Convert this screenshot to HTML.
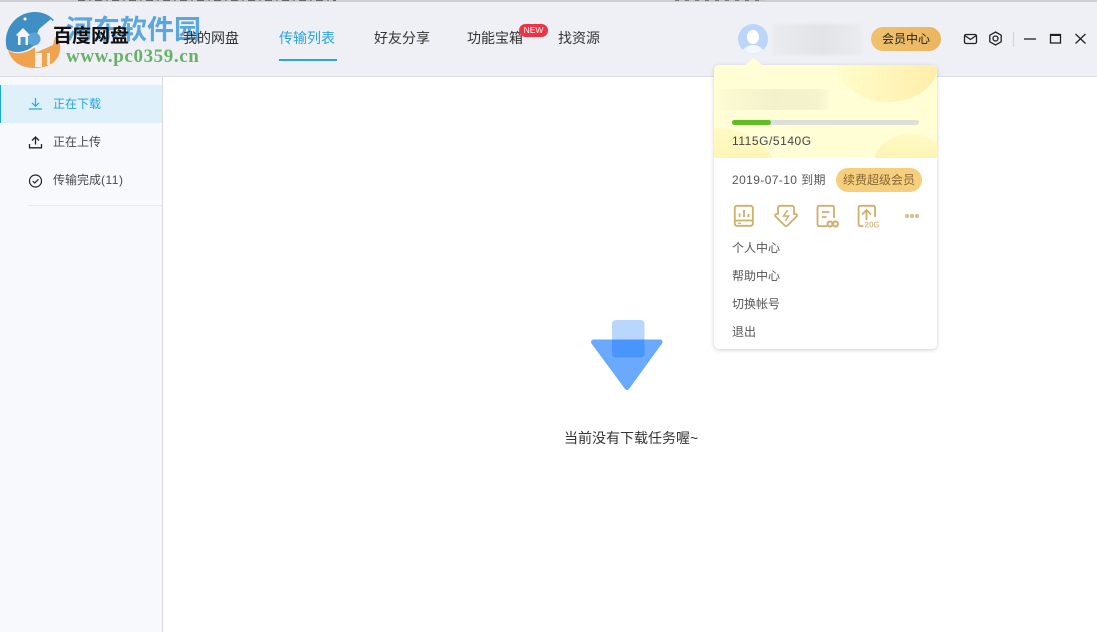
<!DOCTYPE html>
<html lang="zh">
<head>
<meta charset="utf-8">
<style>
html,body{margin:0;padding:0;width:1097px;height:632px;overflow:hidden;background:#fff}
body{position:relative;font-family:"Liberation Sans","Noto Sans CJK SC",sans-serif;color:#333}
.a{position:absolute;white-space:nowrap}
.nav{top:29px;font-size:14px;line-height:18px;color:#333}
.side{left:53px;font-size:12px;line-height:16px;color:#4a4a4a}
.menu{left:732px;font-size:12px;line-height:16px;color:#555}
svg{position:absolute;overflow:visible}
</style>
</head>
<body>
<!-- top strip -->
<div class="a" style="left:0;top:0;width:1097px;height:2px;background:#cfcfd1"></div>
<div class="a" style="left:78px;top:0;width:258px;height:1px;background:repeating-linear-gradient(90deg,#666 0 7px,#bbb 7px 11px,#888 11px 13px,#c4c4c4 13px 17px)"></div>
<div class="a" style="left:675px;top:0;width:90px;height:1px;background:repeating-linear-gradient(90deg,#777 0 4px,#c4c4c4 4px 10px)"></div>
<!-- header -->
<div class="a" style="left:0;top:2px;width:1097px;height:74px;background:#eef0f6;border-bottom:1px solid #dcdde2"></div>
<!-- sidebar -->
<div class="a" style="left:0;top:77px;width:162px;height:555px;background:#f8f9fc;border-right:1px solid #d9dadf"></div>
<div class="a" style="left:0;top:85px;width:162px;height:38px;background:#def1fb"></div>
<div class="a" style="left:0;top:85px;width:1px;height:38px;background:#18a8e0"></div>
<svg style="left:29px;top:98px" width="14" height="12" viewBox="0 0 14 12" fill="none" stroke="#2aa8e0" stroke-width="1.200"><path d="M6.500 0v8M3 4.800l3.500 3.500 3.500-3.500M0 11h13"/></svg>
<div class="a side" style="top:96px;color:#26a3de">正在下载</div>
<svg style="left:29px;top:136px" width="14" height="13" viewBox="0 0 14 13" fill="none" stroke="#222" stroke-width="1.300"><path d="M6.500 8.500V1M3 4.500l3.500-3.500 3.500 3.500M.5 8v3.800h12V8"/></svg>
<div class="a side" style="top:134px">正在上传</div>
<svg style="left:28px;top:173px" width="15" height="15" viewBox="0 0 15 15" fill="none" stroke="#222" stroke-width="1.200"><circle cx="7.500" cy="8" r="6"/><path d="M4.700 8l2 2 3.700-3.700"/></svg>
<div class="a side" style="top:172px">传输完成<span style="letter-spacing:.5px">(11)</span></div>
<div class="a" style="left:28px;top:205px;width:134px;height:1px;background:#e8e9ed"></div>

<!-- nav -->
<div class="a nav" style="left:279px;color:#27a5e2">传输列表</div>
<div class="a" style="left:279px;top:59px;width:58px;height:2px;background:#27a5e2"></div>
<div class="a nav" style="left:374px">好友分享</div>
<div class="a nav" style="left:467px">功能宝箱</div>
<div class="a" style="left:519px;top:24px;width:29px;height:13px;border-radius:7px;background:#ee3344;color:#fff;font-size:8.500px;line-height:13px;text-align:center">NEW</div>
<div class="a nav" style="left:558px">找资源</div>

<!-- watermark logo -->
<svg style="left:5px;top:11px" width="58" height="57" viewBox="0 0 58 57">
<path d="M2 38C-3 20 10 1 30 1c8 0 14 3 19 8L36 20v10L24 38C16 42 8 42 2 38Z" fill="#3f8fc4"/>
<path d="M3 39c7 5 16 4 24-1l24-14c6 8 6 19-2 27-5 4-11 6-19 6C15 57 6 50 3 39Z" fill="#f0a24e"/>
<path d="M30 42h7v14h-7zM42 42h3v12h-3z" fill="#f5efe6"/>
<path d="M30 28l4-10L46 8l10 16-6 2-2 8-18 8Z" fill="#eef0f6"/>
<circle cx="29" cy="28" r="6.500" fill="#5aa3d6"/>
<path d="M11 24l7-7 7 7-2 1v9H13v-9Z" fill="#f7f4f6"/>
<path d="M15.500 26h5v8h-5z" fill="#4a97cc"/>
<circle cx="20" cy="8" r="1.500" fill="#fff"/>
</svg>
<div class="a" style="left:66px;top:14px;font-size:27px;line-height:32px;font-weight:700;color:#4a9fdd;opacity:.9">河东软件园</div>
<div class="a" style="left:53px;top:25px;font-size:19px;line-height:24px;font-weight:700;color:#111">百度网盘</div>
<div class="a nav" style="left:183px">我的网盘</div>
<div class="a" style="left:66px;top:47px;font-family:'Liberation Serif',serif;font-size:19px;line-height:20px;font-weight:700;letter-spacing:.6px;color:#67b266">www.pc0359.cn</div>

<!-- user -->
<svg style="left:738px;top:24px" width="30" height="30" viewBox="0 0 30 30">
<circle cx="15" cy="15" r="15" fill="#bcd5fb"/>
<ellipse cx="15" cy="13" rx="6" ry="7" fill="#fff"/>
<path d="M5 26c3-4 7-5 10-5s7 1 10 5c-6 5-14 5-20 0Z" fill="#f3f6fc"/>
</svg>
<div class="a" style="left:772px;top:24px;width:90px;height:31px;background:linear-gradient(90deg,#ebecf0,#e2e3e6 55%,#ebecee);filter:blur(1px)"></div>
<div class="a" style="left:871px;top:27px;width:70px;height:24px;border-radius:12px;background:linear-gradient(90deg,#f0c26e,#ebb560);color:#222;font-size:12px;line-height:25px;text-align:center">会员中心</div>

<!-- window controls -->
<svg style="left:963px;top:30px" width="130" height="18" viewBox="0 0 130 18" fill="none" stroke="#222" stroke-width="1.300">
<rect x="1.500" y="4.500" width="12" height="9" rx="1.500"/>
<path d="M1.800 5.500l5.700 4 5.700-4"/>
<path d="M32.500 2l5.700 3.200v6.600L32.500 15l-5.700-3.200V5.200Z"/>
<circle cx="32.500" cy="8.500" r="2.500"/>
<path d="M50.500 2v15" stroke="#d6d7dc"/>
<path d="M61 9h12"/>
<rect x="87.500" y="4.500" width="10" height="8.500"/>
<path d="M87 5h11" stroke-width="2"/>
<path d="M112.500 4l10 9.500M122.500 4l-10 9.500"/>
</svg>

<!-- empty state -->
<svg style="left:590px;top:319px" width="75" height="73" viewBox="0 0 75 73">
<path d="M3.500 23H70L37 68.500Z" fill="#6aa9fd" stroke="#6aa9fd" stroke-width="5" stroke-linejoin="round"/>
<path d="M26 1h25c2 0 3.500 1.500 3.500 3.500V20.500H22V4.500C22 2.500 24 1 26 1Z" fill="#b9d6fd"/>
<path d="M22 20.500h32.500V35c0 2-1.500 3.500-3.500 3.500H25.500c-2 0-3.500-1.500-3.500-3.500Z" fill="#4896fb"/>
</svg>
<div class="a" style="left:564px;top:429px;font-size:14px;line-height:18px;color:#333">当前没有下载任务喔~</div>

<!-- popup -->
<div class="a" style="left:714px;top:65px;width:223px;height:284px;background:#fff;border-radius:5px;box-shadow:0 1px 4px rgba(0,0,0,.18)"></div>
<svg style="left:714px;top:65px" width="223" height="93" viewBox="0 0 223 93">
<defs>
<clipPath id="c"><path d="M0 93V5a5 5 0 0 1 5-5h213a5 5 0 0 1 5 5v88Z"/></clipPath>
<linearGradient id="g1" x1="0" x2="1" y1="0" y2="0"><stop offset="0" stop-color="#fffcca"/><stop offset="1" stop-color="#ffeeaa"/></linearGradient>
<linearGradient id="g2" x1="0" x2="0" y1="0" y2="1"><stop offset="0" stop-color="#fffac4"/><stop offset="1" stop-color="#ffea9c"/></linearGradient>
</defs>
<g clip-path="url(#c)">
<rect width="223" height="93" fill="#fffed4"/>
<ellipse cx="174" cy="0" rx="50" ry="37" fill="url(#g1)"/>
<ellipse cx="0" cy="108" rx="62" ry="45" fill="url(#g2)"/>
<ellipse cx="197" cy="101" rx="38" ry="32" fill="url(#g2)"/>
</g>
</svg>
<svg style="left:744px;top:57px" width="20" height="10" viewBox="0 0 20 10"><path d="M0 9l9-8h1l9 8Z" fill="#fffed6"/></svg>
<div class="a" style="left:719px;top:89px;width:110px;height:21px;background:linear-gradient(90deg,#fcfbd2,#f3f1cb 50%,#f5f3cd 90%,#fcfbd4)"></div>
<div class="a" style="left:732px;top:120px;width:187px;height:5px;border-radius:3px;background:#dfdfd9"></div>
<div class="a" style="left:732px;top:120px;width:39px;height:5px;border-radius:3px;background:#5fbd24"></div>
<div class="a" style="left:732px;top:133px;font-size:12px;line-height:17px;letter-spacing:.55px;color:#444">1115G/5140G</div>
<div class="a" style="left:732px;top:172px;font-size:12px;line-height:17px;letter-spacing:.4px;color:#555">2019-07-10 到期</div>
<div class="a" style="left:836px;top:168px;width:86px;height:24px;border-radius:12px;background:#f6cf7c;color:#84683a;font-size:12px;line-height:24px;text-align:center">续费超级会员</div>

<!-- icons -->
<svg style="left:733px;top:204px" width="190" height="26" viewBox="0 0 190 26" fill="none" stroke="#d0ae6c" stroke-width="1.800">
<rect x="1.800" y="1.800" width="18" height="20" rx="2"/>
<path d="M1.800 16.500h18M6.500 13V9.500M11 13V6M15.500 13v-3"/>
<path d="M5 19.300h3" stroke-width="1.200"/>
<path d="M47 1.800h12a2 2 0 0 1 2 2V10h1.500c1.500 0 2 1.500 1 2.500l-9 9a2 2 0 0 1-2.800 0l-9-9c-1-1-.5-2.500 1-2.500H45V3.800a2 2 0 0 1 2-2Z"/>
<path d="M54.500 6l-4 6h5l-3 5" stroke-width="1.500"/>
<path d="M101 14V3.500c0-1-.7-1.700-1.700-1.700H86.200c-1 0-1.700.7-1.700 1.700v17c0 1 .7 1.700 1.700 1.700H94"/>
<path d="M89 8h7.500M89 13h4.500"/>
<circle cx="97" cy="20" r="2.500" stroke-width="2"/><circle cx="102.500" cy="20" r="2.500" stroke-width="2"/>
<path d="M142 13V3.500c0-1-.7-1.700-1.700-1.700h-13c-1 0-1.700.7-1.700 1.700v17c0 1 .7 1.700 1.700 1.700h3"/>
<path d="M133.500 16V6M129 10.500l4.500-4.500 4.500 4.500"/>
<g stroke="none" fill="#d9bf8a"><circle cx="174" cy="12" r="2.100"/><circle cx="179" cy="12" r="2.100"/><circle cx="184" cy="12" r="2.100"/></g>
<text x="131.500" y="23.500" font-size="8" font-weight="700" stroke="none" fill="#d9bf8a" font-family="Liberation Sans">20G</text>
</svg>

<div class="a menu" style="top:240px">个人中心</div>
<div class="a menu" style="top:268px">帮助中心</div>
<div class="a menu" style="top:296px">切换帐号</div>
<div class="a menu" style="top:324px">退出</div>
</body>
</html>
